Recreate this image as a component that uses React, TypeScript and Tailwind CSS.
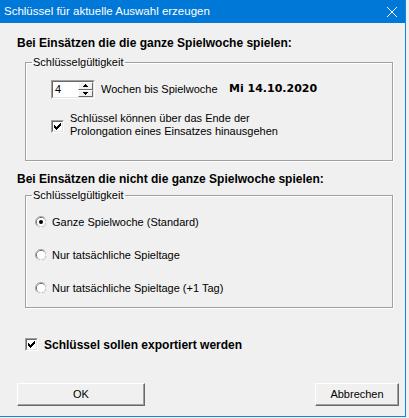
import React from 'react'

function CheckBox() {
  return (
    <span className="flex h-[13px] w-[13px] shrink-0 border border-t-[#a0a0a0] border-l-[#a0a0a0] border-b-white border-r-white">
      <span className="flex flex-1 items-center justify-center border border-t-[#696969] border-l-[#696969] border-b-[#e3e3e3] border-r-[#e3e3e3] bg-white">
        <svg width="7" height="7" viewBox="0 0 7 7" shapeRendering="crispEdges">
          <path d="M0 2 L2 4 L6 0 L7 0 L7 3 L2 7 L0 5 Z" fill="#000" />
        </svg>
      </span>
    </span>
  )
}

function Radio({ checked }: { checked?: boolean }) {
  return (
    <svg width="12" height="12" viewBox="0 0 12 12" className="shrink-0">
      <circle cx="6" cy="6" r="5.5" fill="#fff" stroke="#a0a0a0" />
      <path d="M9.89 2.11 A5.5 5.5 0 0 1 2.11 9.89" fill="none" stroke="#fff" />
      <circle cx="6" cy="6" r="4.5" fill="none" stroke="#696969" />
      <path d="M9.18 2.82 A4.5 4.5 0 0 1 2.82 9.18" fill="none" stroke="#e3e3e3" />
      <circle cx="6" cy="6" r="4" fill="#fff" />
      {checked && <circle cx="6" cy="6" r="2" fill="#000" />}
    </svg>
  )
}

function SpinButton({ up }: { up?: boolean }) {
  return (
    <div className="flex flex-1 items-center justify-center border border-t-white border-l-white border-b-[#696969] border-r-[#696969] bg-[#f0f0f0]">
      <svg width="5" height="3" viewBox="0 0 5 3" shapeRendering="crispEdges">
        <path d={up ? 'M2.5 0 L5 3 L0 3 Z' : 'M0 0 L5 0 L2.5 3 Z'} fill="#000" />
      </svg>
    </div>
  )
}

function Group({ label, children }: { label: string; children: React.ReactNode }) {
  return (
    <fieldset className="ml-[8px] w-[368px] border border-[#a0a0a0] shadow-[1px_1px_0_#fff,inset_1px_1px_0_#fff]">
      <legend className="ml-[6px] px-[1px] text-[11px] leading-[14px]">{label}</legend>
      {children}
    </fieldset>
  )
}

function Button({ label, width }: { label: string; width: string }) {
  return (
    <button className={`h-[23px] ${width} border border-t-white border-l-white border-b-[#696969] border-r-[#696969] bg-[#f0f0f0] text-[11px] shadow-[inset_-1px_-1px_0_#a0a0a0]`}>
      {label}
    </button>
  )
}

export default function App() {
  return (
    <div className="h-[418px] w-[409px] overflow-hidden bg-[#f0f0f0] font-['Liberation_Sans',Arial,sans-serif] text-black">
      <div className="flex h-[417px] w-[406px] flex-col border-r border-b border-[#1883d7] bg-[#f0f0f0]">

        {/* title bar */}
        <div className="flex h-[23px] shrink-0 items-center justify-between bg-[#0078d7] pl-[4px] pr-[8px] text-white">
          <span className="text-[11.5px]">Schlüssel für aktuelle Auswahl erzeugen</span>
          <svg width="10" height="10" viewBox="0 0 10 10">
            <path d="M0 0 L10 10 M10 0 L0 10" stroke="#fff" strokeWidth="1" />
          </svg>
        </div>

        <div className="flex flex-col pl-[17px] pr-[6px]">
          <h1 className="mt-[13px] text-[12px] font-bold leading-[14px]">Bei Einsätzen die die ganze Spielwoche spielen:</h1>

          <div className="mt-[5px]">
            <Group label="Schlüsselgültigkeit">
              <div className="pl-[25px] pt-[11px] pb-[22px] text-[11px]">
                <div className="flex items-center">
                  <div className="flex h-[19px] w-[44px] border border-t-[#a0a0a0] border-l-[#a0a0a0] border-b-white border-r-white">
                    <div className="flex flex-1 border border-t-[#696969] border-l-[#696969] border-b-[#e3e3e3] border-r-[#e3e3e3] bg-white">
                      <span className="flex-1 pl-[2px] leading-[15px]">4</span>
                      <div className="flex w-[15px] flex-col">
                        <SpinButton up />
                        <SpinButton />
                      </div>
                    </div>
                  </div>
                  <span className="ml-[6px] w-[128px]">Wochen bis Spielwoche</span>
                  <span className="font-['DejaVu_Sans',sans-serif] font-bold">Mi 14.10.2020</span>
                </div>

                <div className="mt-[13px] flex items-start">
                  <span className="mt-[8px]">
                    <CheckBox />
                  </span>
                  <span className="ml-[6px] leading-[13px]">
                    Schlüssel können über das Ende der
                    <br />
                    Prolongation eines Einsatzes hinausgehen
                  </span>
                </div>
              </div>
            </Group>
          </div>

          <h2 className="mt-[11px] text-[12px] font-bold leading-[14px]">Bei Einsätzen die nicht die ganze Spielwoche spielen:</h2>

          <div className="mt-[2px]">
            <Group label="Schlüsselgültigkeit">
              <div className="flex flex-col gap-[19px] pl-[9px] pt-[13px] pb-[12px] text-[11px] leading-[14px]">
                <div className="flex items-center gap-[5px]">
                  <Radio checked />
                  <span>Ganze Spielwoche (Standard)</span>
                </div>
                <div className="flex items-center gap-[5px]">
                  <Radio />
                  <span>Nur tatsächliche Spieltage</span>
                </div>
                <div className="flex items-center gap-[5px]">
                  <Radio />
                  <span>Nur tatsächliche Spieltage (+1 Tag)</span>
                </div>
              </div>
            </Group>
          </div>

          <div className="ml-[8px] mt-[30px] flex items-start">
            <CheckBox />
            <span className="ml-[6px] text-[12px] font-bold leading-[14px]">Schlüssel sollen exportiert werden</span>
          </div>

          <div className="mt-[31px] flex justify-between">
            <Button label="OK" width="w-[128px]" />
            <Button label="Abbrechen" width="w-[84px]" />
          </div>
        </div>
      </div>
    </div>
  )
}
